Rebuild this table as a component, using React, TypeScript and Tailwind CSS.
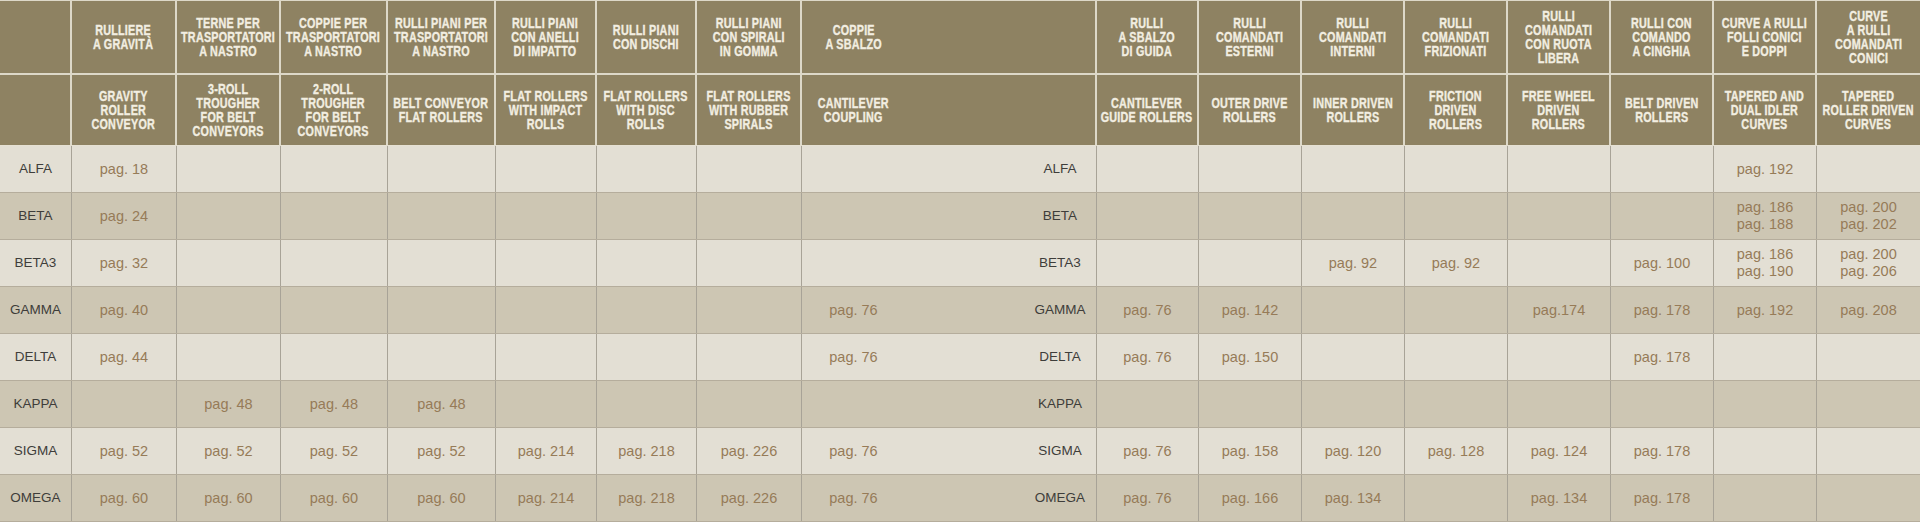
import React from "react";

const GRID =
  "grid grid-cols-[72px_105px_104px_107px_108px_101px_100px_105px_295px_102px_103px_103px_103px_103px_103px_103px_103px]";

type Col = { it: string; en: string };

const cols: Col[] = [
  { it: "RULLIERE\nA GRAVITÀ", en: "GRAVITY\nROLLER\nCONVEYOR" },
  { it: "TERNE PER\nTRASPORTATORI\nA NASTRO", en: "3-ROLL\nTROUGHER\nFOR BELT\nCONVEYORS" },
  { it: "COPPIE PER\nTRASPORTATORI\nA NASTRO", en: "2-ROLL\nTROUGHER\nFOR BELT\nCONVEYORS" },
  { it: "RULLI PIANI PER\nTRASPORTATORI\nA NASTRO", en: "BELT CONVEYOR\nFLAT ROLLERS" },
  { it: "RULLI PIANI\nCON ANELLI\nDI IMPATTO", en: "FLAT ROLLERS\nWITH IMPACT\nROLLS" },
  { it: "RULLI PIANI\nCON DISCHI", en: "FLAT ROLLERS\nWITH DISC\nROLLS" },
  { it: "RULLI PIANI\nCON SPIRALI\nIN GOMMA", en: "FLAT ROLLERS\nWITH RUBBER\nSPIRALS" },
  { it: "COPPIE\nA SBALZO", en: "CANTILEVER\nCOUPLING" },
  { it: "RULLI\nA SBALZO\nDI GUIDA", en: "CANTILEVER\nGUIDE ROLLERS" },
  { it: "RULLI\nCOMANDATI\nESTERNI", en: "OUTER DRIVE\nROLLERS" },
  { it: "RULLI\nCOMANDATI\nINTERNI", en: "INNER DRIVEN\nROLLERS" },
  { it: "RULLI\nCOMANDATI\nFRIZIONATI", en: "FRICTION\nDRIVEN\nROLLERS" },
  { it: "RULLI\nCOMANDATI\nCON RUOTA\nLIBERA", en: "FREE WHEEL\nDRIVEN\nROLLERS" },
  { it: "RULLI CON\nCOMANDO\nA CINGHIA", en: "BELT DRIVEN\nROLLERS" },
  { it: "CURVE A RULLI\nFOLLI CONICI\nE DOPPI", en: "TAPERED AND\nDUAL IDLER\nCURVES" },
  { it: "CURVE\nA RULLI\nCOMANDATI\nCONICI", en: "TAPERED\nROLLER DRIVEN\nCURVES" },
];

type Row = { name: string; cells: string[] };

const rows: Row[] = [
  { name: "ALFA", cells: ["pag. 18", "", "", "", "", "", "", "", "", "", "", "", "", "", "pag. 192", ""] },
  { name: "BETA", cells: ["pag. 24", "", "", "", "", "", "", "", "", "", "", "", "", "", "pag. 186\npag. 188", "pag. 200\npag. 202"] },
  { name: "BETA3", cells: ["pag. 32", "", "", "", "", "", "", "", "", "", "pag. 92", "pag. 92", "", "pag. 100", "pag. 186\npag. 190", "pag. 200\npag. 206"] },
  { name: "GAMMA", cells: ["pag. 40", "", "", "", "", "", "", "pag. 76", "pag. 76", "pag. 142", "", "", "pag.174", "pag. 178", "pag. 192", "pag. 208"] },
  { name: "DELTA", cells: ["pag. 44", "", "", "", "", "", "", "pag. 76", "pag. 76", "pag. 150", "", "", "", "pag. 178", "", ""] },
  { name: "KAPPA", cells: ["", "pag. 48", "pag. 48", "pag. 48", "", "", "", "", "", "", "", "", "", "", "", ""] },
  { name: "SIGMA", cells: ["pag. 52", "pag. 52", "pag. 52", "pag. 52", "pag. 214", "pag. 218", "pag. 226", "pag. 76", "pag. 76", "pag. 158", "pag. 120", "pag. 128", "pag. 124", "pag. 178", "", ""] },
  { name: "OMEGA", cells: ["pag. 60", "pag. 60", "pag. 60", "pag. 60", "pag. 214", "pag. 218", "pag. 226", "pag. 76", "pag. 76", "pag. 166", "pag. 134", "", "pag. 134", "pag. 178", "", ""] },
];

function HeadText({ text }: { text: string }) {
  return (
    <div className="shrink-0 whitespace-pre text-center text-[14px] font-bold leading-[14px] tracking-[0.3px] text-[#f2eee1] scale-x-[0.77] [-webkit-text-stroke:0.35px_#f2eee1]">
      {text}
    </div>
  );
}

function HeaderRow({ keyName, last }: { keyName: "it" | "en"; last: boolean }) {
  const h = last ? "h-[71px] border-b border-[#e6e1d3]" : "h-[74px] border-b-2 border-[#ddd8c8]";
  return (
    <div className={`${GRID} bg-[#8e8262]`}>
      <div className={`${h} border-r-2 border-r-[#ddd8c8]`} />
      {cols.map((c, i) => (
        <div
          key={i}
          className={`${h} flex items-center ${i === 7 ? "justify-start" : "justify-center"} ${
            i === cols.length - 1 ? "" : "border-r-2 border-r-[#ddd8c8]"
          }`}
        >
          {i === 7 ? (
            <div className="flex w-[103px] justify-center">
              <HeadText text={c[keyName]} />
            </div>
          ) : (
            <HeadText text={c[keyName]} />
          )}
        </div>
      ))}
    </div>
  );
}

function Pag({ text }: { text: string }) {
  return (
    <div className="whitespace-pre text-center text-[14.5px] leading-[17px] text-[#967b58]">{text}</div>
  );
}

export default function App() {
  return (
    <div
      className="w-[1920px] h-[522px] overflow-hidden bg-[#e3dfd4]"
      style={{ fontFamily: '"Liberation Sans", Arial, sans-serif' }}
    >
      <div className="h-px bg-[#ddd8c8]" />
      <HeaderRow keyName="it" last={false} />
      <HeaderRow keyName="en" last={true} />
      {rows.map((r, ri) => (
        <div
          key={r.name}
          className={`${GRID} ${ri % 2 === 0 ? "bg-[#e3dfd4]" : "bg-[#cdc6b3]"} border-b border-[#b5ad9c]`}
        >
          <div className="h-[46px] flex items-center justify-center border-r border-[#a8a397] text-[13.5px] text-[#3e3d3a]">
            {r.name}
          </div>
          {r.cells.map((c, ci) => (
            <div
              key={ci}
              className={`h-[46px] flex items-center ${ci === 7 ? "justify-between" : "justify-center"} ${
                ci === r.cells.length - 1 ? "" : "border-r border-[#a8a397]"
              }`}
            >
              {ci === 7 ? (
                <>
                  <div className="flex w-[103px] justify-center">
                    <Pag text={c} />
                  </div>
                  <div className="flex w-[72px] justify-center text-[13.5px] text-[#3e3d3a]">{r.name}</div>
                </>
              ) : (
                <Pag text={c} />
              )}
            </div>
          ))}
        </div>
      ))}
    </div>
  );
}
